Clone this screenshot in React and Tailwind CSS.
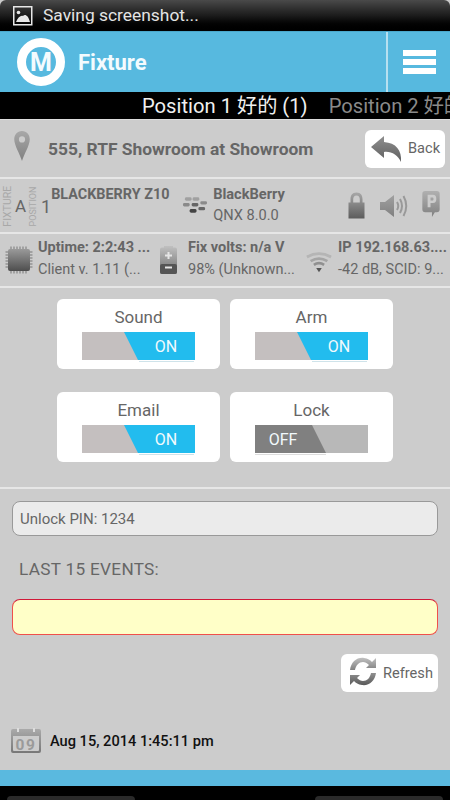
import React from "react";

const F = { fontFamily: '"Roboto","Noto Sans CJK SC",sans-serif' };

function Toggle({ label, on }) {
  return (
    <div className="w-[163px] h-[70px] bg-white rounded-[6px] flex flex-col items-center">
      <div className="h-[33px] pt-[7px] text-[17px] leading-[22px] text-[#666666]">{label}</div>
      <svg width="114" height="32" viewBox="0 0 114 32" className="block -translate-x-[1px]">
        {on ? (
          <g>
            <rect x="1" y="0" width="113" height="28" fill="#c4bfbf" />
            <polygon points="43,0 114,0 114,28 57,28" fill="#22bcee" />
            <rect x="58" y="29" width="55" height="1" fill="#cfe3ea" />
          </g>
        ) : (
          <g>
            <rect x="1" y="0" width="113" height="28" fill="#b8b8b8" />
            <polygon points="1,0 58,0 72,28 1,28" fill="#808080" />
            <rect x="1" y="29" width="71" height="1" fill="#dddddd" />
          </g>
        )}
        <text x={on ? 85 : 29} y="20" textAnchor="middle" fontSize="16" fill="#f2fafd" style={F}>
          {on ? "ON" : "OFF"}
        </text>
      </svg>
    </div>
  );
}

function Divider() {
  return <div className="h-[2px] bg-[#e6e6e6]" />;
}

const Grad = ({ id, a = "#a8a8a8", b = "#5c5c5c" }) => (
  <linearGradient id={id} x1="0" y1="0" x2="0" y2="1">
    <stop offset="0" stopColor={a} />
    <stop offset="1" stopColor={b} />
  </linearGradient>
);

export default function App() {
  return (
    <div className="w-[450px] h-[800px] bg-[#cccccc] flex flex-col overflow-hidden" style={F}>
      {/* status bar */}
      <div className="h-[31px] shrink-0 bg-gradient-to-b from-[#4a4a4a] via-[#1c1c1c] to-[#000000] rounded-t-[6px] flex items-center pl-[13px] gap-[10px]">
        <svg width="20" height="20" viewBox="0 0 20 20">
          <rect x="0.75" y="0.75" width="18" height="18" fill="none" stroke="#e8e8e8" strokeWidth="1.5" />
          <circle cx="5.5" cy="6.5" r="1.8" fill="#e8e8e8" />
          <path d="M3 16 C5 11 8 9 10 10 C12 8 15 9 17 16 Z" fill="#e8e8e8" />
        </svg>
        <span className="text-[17.4px] leading-[22px] text-[#e4e4e4] -translate-y-[1px]">Saving screenshot...</span>
      </div>

      {/* header */}
      <div className="h-[61px] shrink-0 bg-[#57b9df] flex items-center border-t border-[#4aa8cc]">
        <div className="ml-[17px] w-[48px] h-[48px] rounded-full border-[9px] border-white flex items-center justify-center">
          <span className="text-[25px] leading-none font-bold text-[#f4fbfe]">M</span>
        </div>
        <span className="ml-[13px] text-[22px] font-bold text-[#f4fbfe]">Fixture</span>
        <div className="ml-auto h-full w-[64px] border-l-2 border-[#b6e0f0] flex flex-col items-center justify-center gap-[3px]">
          <div className="w-[33px] h-[6px] bg-white" />
          <div className="w-[33px] h-[6px] bg-white" />
          <div className="w-[33px] h-[6px] bg-white" />
        </div>
      </div>

      {/* tabs */}
      <div className="h-[27px] shrink-0 bg-black flex items-center pl-[142px] whitespace-nowrap overflow-hidden text-[20.2px] leading-[26px]">
        <span className="text-[#f0f0f0]">Position 1 好的 (1)</span>
        <span className="ml-[21px] text-[#8a8a8a]">Position 2 好的</span>
      </div>

      {/* location */}
      <div className="h-[58px] shrink-0 flex items-center border-t border-[#dddddd]">
        <svg width="18" height="31" viewBox="0 0 18 32" className="ml-[13px] -translate-y-[2px]">
          <defs><Grad id="pin" a="#a8a8a8" b="#808080" /></defs>
          <path fillRule="evenodd" d="M9 0 C14 0 17 4 17 8.5 C17 15 11 24 9 31 C7 24 1 15 1 8.5 C1 4 4 0 9 0 Z M9 5.5 A3.2 3.2 0 1 0 9 11.9 A3.2 3.2 0 1 0 9 5.5 Z" fill="url(#pin)" />
        </svg>
        <span className="ml-[17px] text-[17.4px] font-bold text-[#666666] whitespace-nowrap translate-y-[1px]">555, RTF Showroom at Showroom</span>
        <div className="ml-auto mr-[5px] w-[80px] h-[38px] bg-white rounded-[6px] flex items-center pl-[6px]">
          <svg width="31" height="26" viewBox="0 0 31 26">
            <defs><Grad id="bk" a="#8f8f8f" b="#5f5f5f" /></defs>
            <path d="M13 0 L0 11 L13 22 L13 16 C20 15 27 19 30 26 C31 14 25 7 13 6 Z" fill="url(#bk)" />
          </svg>
          <span className="ml-[6px] text-[14.6px] text-[#666666]">Back</span>
        </div>
      </div>
      <Divider />

      {/* device row */}
      <div className="h-[53px] shrink-0 flex items-center relative">
        <div className="w-[13px] ml-[2px] flex items-center justify-center translate-y-[1px]">
          <span className="block text-[10.5px] leading-none text-[#a8a8a8] -rotate-90 whitespace-nowrap">FIXTURE</span>
        </div>
        <span className="w-[12px] text-[17px] text-[#666666] translate-y-[1px]">A</span>
        <div className="w-[13px] flex items-center justify-center translate-y-[1px]">
          <span className="block text-[9px] leading-none text-[#a8a8a8] -rotate-90 whitespace-nowrap">POSITION</span>
        </div>
        <span className="ml-[1px] text-[18px] text-[#666666] translate-y-[1px]">1</span>
        <span className="-translate-y-[11px] text-[14.4px] font-bold text-[#666666] whitespace-nowrap w-[130px]">BLACKBERRY Z10</span>
        <svg width="26" height="18" viewBox="0 0 27 18" className="ml-[1px]">
          <g fill="#777777">
            <rect x="3" y="0" width="7" height="3.5" rx="1.5" fill="#a0a0a0" />
            <rect x="11" y="0" width="7" height="3.5" rx="1.5" fill="#a0a0a0" />
            <rect x="1" y="6" width="7" height="3.5" rx="1.5" fill="#8a8a8a" />
            <rect x="10" y="6" width="7" height="3.5" rx="1.5" fill="#666" />
            <rect x="19" y="4" width="7" height="3.5" rx="1.5" fill="#8a8a8a" />
            <rect x="8" y="12" width="7" height="4" rx="1.5" fill="#444" />
            <rect x="17" y="10" width="7" height="3.5" rx="1.5" fill="#666" />
          </g>
        </svg>
        <div className="ml-[5px] flex flex-col w-[80px]">
          <span className="text-[14.6px] leading-[19px] font-bold text-[#666666]">BlackBerry</span>
          <span className="text-[14.6px] leading-[23px] text-[#666666]">QNX 8.0.0</span>
        </div>
        <svg width="17" height="27" viewBox="0 0 17 26" className="ml-[55px]">
          <defs><Grad id="lk" /></defs>
          <path fillRule="evenodd" d="M8.5 0 C13 0 14.5 3 14.5 7 L14.5 10 L16.5 10 L16.5 26 L0.5 26 L0.5 10 L2.5 10 L2.5 7 C2.5 3 4 0 8.5 0 Z M8.5 3 C6 3 5.2 5 5.2 7 L5.2 10 L11.8 10 L11.8 7 C11.8 5 11 3 8.5 3 Z" fill="url(#lk)" />
        </svg>
        <svg width="28" height="24" viewBox="0 0 28 24" className="ml-[15px]">
          <defs><Grad id="sp" a="#a0a0a0" b="#808080" /></defs>
          <path d="M0 8 H5 L14 1 V23 L5 16 H0 Z" fill="url(#sp)" />
          <path d="M17 8 Q19.5 12 17 16 M20 5 Q24 12 20 19 M23.5 2 Q29 12 23.5 22" fill="none" stroke="#999999" strokeWidth="2" />
        </svg>
        <svg width="18" height="26" viewBox="0 0 18 27" className="ml-[14px] -translate-y-[2px]">
          <defs><Grad id="pk" a="#b0b0b0" b="#808080" /></defs>
          <path fillRule="evenodd" d="M3 0 H15 Q18 0 18 3 V19 Q18 22 15 22 H13 L10 27 V22 H3 Q0 22 0 19 V3 Q0 0 3 0 Z M5.5 4 V17 H8.5 V12.5 H11 C13.5 12.5 14.5 11 14.5 8.3 C14.5 5.5 13.5 4 11 4 Z M8.5 6.7 H10.5 C11.2 6.7 11.6 7.2 11.6 8.3 C11.6 9.4 11.2 9.9 10.5 9.9 H8.5 Z" fill="url(#pk)" />
        </svg>
      </div>
      <Divider />

      {/* stats row */}
      <div className="h-[52px] shrink-0 flex items-center">
        <svg width="28" height="28" viewBox="0 0 28 28" className="ml-[5px]">
          <defs><Grad id="chip" a="#9a9a9a" b="#4e4e4e" /></defs>
          <path d="M6 0.5 V27.5 M9 0.5 V27.5 M12 0.5 V27.5 M15 0.5 V27.5 M18 0.5 V27.5 M21 0.5 V27.5 M0.5 6 H27.5 M0.5 9 H27.5 M0.5 12 H27.5 M0.5 15 H27.5 M0.5 18 H27.5 M0.5 21 H27.5" stroke="#777" strokeWidth="1" />
          <rect x="3" y="3" width="22" height="22" rx="2" fill="url(#chip)" />
        </svg>
        <div className="ml-[5px] w-[117px] flex flex-col whitespace-nowrap">
          <span className="text-[14.5px] leading-[20px] font-bold text-[#666666]">Uptime: 2:2:43 ...</span>
          <span className="text-[14.5px] leading-[24px] text-[#666666]">Client v. 1.11 (...</span>
        </div>
        <svg width="17" height="28" viewBox="0 0 17 28" className="ml-[5px]">
          <defs><Grad id="bat" a="#c0c0c0" b="#707070" /></defs>
          <path d="M4 0 H13 V1.5 H15 Q17 1.5 17 3.5 V26 Q17 28 15 28 H2 Q0 28 0 26 V3.5 Q0 1.5 2 1.5 H4 Z" fill="url(#bat)" />
          <rect x="0" y="18" width="17" height="10" rx="2" fill="#555555" />
          <path d="M8.5 6 V13 M5 9.5 H12" stroke="#e5e5e5" strokeWidth="2" />
          <path d="M5 21.5 H12" stroke="#e5e5e5" strokeWidth="2" />
        </svg>
        <div className="ml-[11px] w-[106px] flex flex-col whitespace-nowrap">
          <span className="text-[14.5px] leading-[20px] font-bold text-[#666666]">Fix volts: n/a V</span>
          <span className="text-[14.5px] leading-[24px] text-[#666666]">98% (Unknown...</span>
        </div>
        <svg width="26" height="21" viewBox="0 0 28 22" className="ml-[12px] translate-y-[2px]">
          <path d="M1 5 Q14 -2 27 5" fill="none" stroke="#b5b5b5" strokeWidth="3" />
          <path d="M5 9.5 Q14 4 23 9.5" fill="none" stroke="#a5a5a5" strokeWidth="3" />
          <path d="M8.5 13.5 Q14 10 19.5 13.5" fill="none" stroke="#909090" strokeWidth="3" />
          <polygon points="11,17 17,17 14,21.5" fill="#555555" />
        </svg>
        <div className="ml-[6px] flex flex-col whitespace-nowrap">
          <span className="text-[14.5px] leading-[20px] font-bold text-[#666666]">IP 192.168.63....</span>
          <span className="text-[14.5px] leading-[24px] text-[#666666]">-42 dB, SCID: 9...</span>
        </div>
      </div>
      <Divider />

      {/* toggles */}
      <div className="h-[199px] shrink-0 pt-[11px] pl-[57px]">
        <div className="grid grid-cols-[163px_163px] gap-x-[10px] gap-y-[23px]">
          <Toggle label="Sound" on />
          <Toggle label="Arm" on />
          <Toggle label="Email" on />
          <Toggle label="Lock" />
        </div>
      </div>
      <Divider />

      {/* form */}
      <div className="px-[12px] pt-[12px] flex flex-col flex-1">
        <div className="h-[35px] bg-[#ebebeb] border border-[#999999] rounded-[8px] flex items-center pl-[7px] text-[15px] text-[#666666]">
          <span className="translate-y-[1px]">Unlock PIN: 1234</span>
        </div>
        <div className="h-[63px] pl-[7px] pt-[22px] text-[17.2px] leading-[22px] tracking-[0.3px] text-[#666666]">LAST 15 EVENTS:</div>
        <div className="h-[36px] bg-[#ffffc8] border border-[#f0504a] border-t-[#d01838] rounded-[8px]" />
        <div className="mt-[19px] self-end w-[97px] h-[38px] bg-white rounded-[6px] flex items-center pl-[7px]">
          <svg width="30" height="31" viewBox="0 0 30 31" className="-translate-y-[2px]">
            <defs><Grad id="r1" a="#c0c0c0" b="#808080" /><Grad id="r2" a="#909090" b="#5a5a5a" /></defs>
            <path d="M2 14 C3 6 9 1 16 2 C20 2.5 22 4 24 6 L28 2 V12 H18 L21 9 C19 7 17 6 15 6 C11 6 8 9 7 14 Z" fill="url(#r1)" />
            <path d="M28 17 C27 25 21 30 14 29 C10 28.5 8 27 6 25 L2 29 V19 H12 L9 22 C11 24 13 25 15 25 C19 25 22 22 23 17 Z" fill="url(#r2)" />
          </svg>
          <span className="ml-[5px] text-[14.6px] text-[#666666] translate-y-[1px]">Refresh</span>
        </div>
        <div className="mt-[36px] flex items-center">
          <svg width="30" height="25" viewBox="0 0 30 25" className="-ml-[1px]">
            <defs><Grad id="cal" a="#aaaaaa" b="#777777" /></defs>
            <path fillRule="evenodd" d="M2 1 H28 Q30 1 30 3 V23 Q30 25 28 25 H2 Q0 25 0 23 V3 Q0 1 2 1 Z M2 8 V22 Q2 23 3 23 H27 Q28 23 28 22 V8 Z" fill="url(#cal)" />
            <rect x="6" y="0" width="2" height="4" fill="#dddddd" />
            <rect x="22" y="0" width="2" height="4" fill="#dddddd" />
            <text x="15" y="21.5" textAnchor="middle" fontSize="15.5" fontWeight="700" letterSpacing="1.5" fill="#9a9a9a" style={F}>09</text>
          </svg>
          <span className="ml-[9px] text-[14.6px] font-medium text-[#111111] translate-y-[1px]">Aug 15, 2014 1:45:11 pm</span>
        </div>
      </div>

      {/* bottom */}
      <div className="h-[16px] shrink-0 bg-[#5ab9df]" />
      <div className="h-[14px] shrink-0 bg-black flex justify-between items-end px-[7px]">
        <div className="w-[128px] h-[4px] bg-[#2a2a2a] rounded-t-[6px]" />
        <div className="w-[128px] h-[4px] bg-[#2a2a2a] rounded-t-[6px]" />
      </div>
    </div>
  );
}
